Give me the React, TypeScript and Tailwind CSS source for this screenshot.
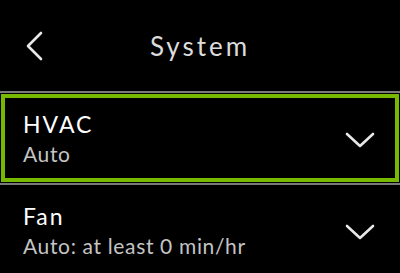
const rows = [
  { title: "HVAC", value: "Auto", selected: true },
  { title: "Fan", value: "Auto: at least 0 min/hr", selected: false },
];

function BackIcon() {
  return (
    <svg width="18" height="30" viewBox="0 0 18 30" className="absolute left-[25px] top-[31px]">
      <polyline points="16,2 3,15 16,28" fill="none" stroke="#e8e8e8" strokeWidth="2.6" strokeLinecap="round" strokeLinejoin="round" />
    </svg>
  );
}

function DownIcon() {
  return (
    <svg width="30" height="18" viewBox="0 0 30 18">
      <polyline points="2,3 15,15 28,3" fill="none" stroke="#e8e8e8" strokeWidth="2.6" strokeLinecap="round" strokeLinejoin="round" />
    </svg>
  );
}

export default function App() {
  return (
    <div
      className="w-[400px] h-[273px] bg-black overflow-hidden text-[#e6e6e6]"
      style={{ fontFamily: "Lato, 'Open Sans', sans-serif" }}
    >
      {/* header */}
      <div className="relative h-[91px] flex items-center justify-center">
        <BackIcon />
        <span className="text-[26px] tracking-[3px] text-[#dcdcdc] mt-[2px]">System</span>
      </div>
      <div className="h-[2px] bg-[#7a7a7a]" />

      {rows.map((row) => (
        <div key={row.title}>
          <div className="px-[1px] py-[1px]">
            <div
              className={`flex items-center justify-between h-[88px] pl-[18px] pr-[20px] border-[4px] ${
                row.selected ? "border-[#76b900]" : "border-transparent"
              }`}
            >
              <div className="flex flex-col leading-none">
                <span className="text-[23px] tracking-[2px] text-white">{row.title}</span>
                <span className="text-[21px] tracking-[0.65px] text-[#c4c4c4] mt-[7px]">{row.value}</span>
              </div>
              <div className="mt-[4px]">
                <DownIcon />
              </div>
            </div>
          </div>
          <div className="h-[2px] bg-[#7a7a7a]" />
        </div>
      ))}
    </div>
  );
}
